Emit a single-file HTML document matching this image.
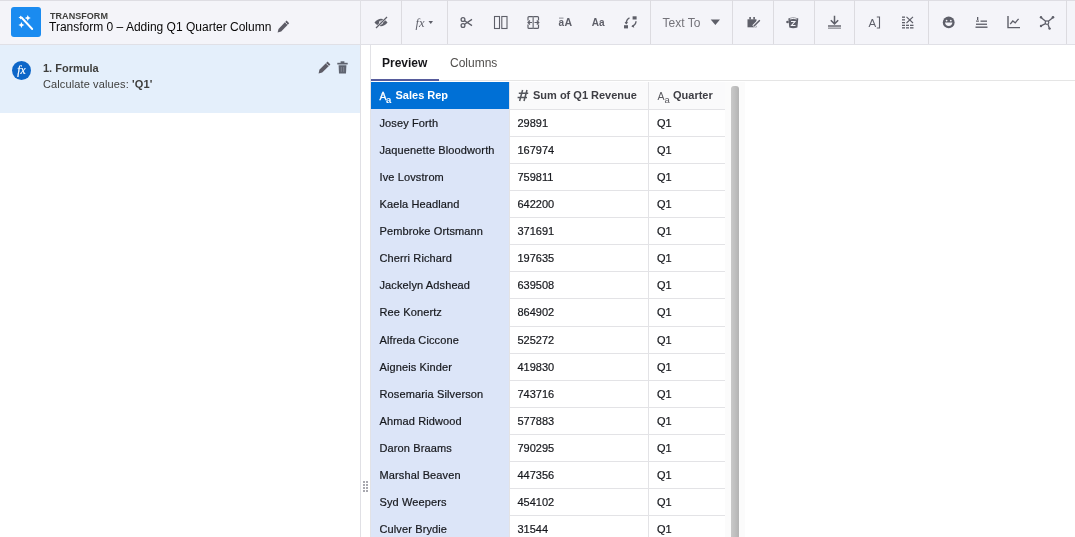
<!DOCTYPE html>
<html><head><meta charset="utf-8">
<style>
*{box-sizing:border-box;margin:0;padding:0}
html,body{width:1075px;height:537px;overflow:hidden;background:#fff;font-family:"Liberation Sans",sans-serif;color:#080707}
.abs{position:absolute}
#top{position:absolute;left:0;top:0;width:1075px;height:45px;background:#f4f4f9;border-bottom:1px solid #e0e0e6}
#topline{position:absolute;left:0;top:0;width:1075px;height:1px;background:#dedde3}
.sep{position:absolute;top:0;width:1px;height:44px;background:#dcdbe0}
.ico{position:absolute;overflow:visible}
#left{position:absolute;left:0;top:45px;width:360px;height:492px;background:#fff}
#vdiv{position:absolute;left:360px;top:0;width:1px;height:537px;background:#e0e0e5}
#sel{position:absolute;left:0;top:45px;width:360px;height:68px;background:#e4effb}
#tabs{position:absolute;left:370px;top:45px;width:705px;height:37px;background:#fff}
#tabline{position:absolute;left:370px;top:80px;width:705px;height:1px;background:#e5e5e5}
#tabul{position:absolute;left:371px;top:79px;width:68px;height:2px;background:#575c9c}
.cell{position:absolute;height:27px;font-size:11px;line-height:27px;white-space:nowrap;-webkit-text-stroke:0.2px currentColor}
</style></head><body><div id="wrap" style="position:absolute;left:0;top:0;width:1075px;height:537px;will-change:transform">
<div id="top"></div>
<div id="topline"></div>

<!-- toolbar -->
<svg class="ico" style="left:0;top:0" width="1075" height="45" viewBox="0 0 1075 45">
 <g fill="#dcdbe0">
  <rect x="401" y="0" width="1" height="44"/><rect x="447" y="0" width="1" height="44"/>
  <rect x="650" y="0" width="1" height="44"/><rect x="732" y="0" width="1" height="44"/>
  <rect x="773" y="0" width="1" height="44"/><rect x="814" y="0" width="1" height="44"/>
  <rect x="854" y="0" width="1" height="44"/><rect x="928" y="0" width="1" height="44"/>
  <rect x="1066" y="0" width="1" height="44"/>
 </g>
 <g fill="#5e5f69" stroke="none">
  <!-- eye slash -->
  <path d="M374.5 22.5 Q381 15 387.5 22.5 Q381 30 374.5 22.5Z"/>
  <circle cx="381" cy="22.5" r="2" fill="#f4f4f9"/>
  <circle cx="381" cy="22.5" r="1.1"/>
  <path d="M376 28 L387 17" stroke="#f4f4f9" stroke-width="2.4"/>
  <path d="M376 28 L387 17" stroke="#5e5f69" stroke-width="1.2"/>
  <!-- fx -->
  <text x="415.5" y="26.5" font-family="Liberation Serif" font-style="italic" font-size="12.5" fill="#5e5f69">fx</text>
  <path d="M428.5 21 H433 L430.75 24 Z"/>
  <!-- scissors -->
  <g fill="none" stroke="#5e5f69" stroke-width="1.3">
   <circle cx="463" cy="19.5" r="1.9"/><circle cx="463" cy="25.5" r="1.9"/>
   <path d="M464.6 20.8 L472 25.6 M464.6 24.2 L472 19.4"/>
  </g>
  <!-- split columns -->
  <g fill="none" stroke="#5e5f69" stroke-width="1.1">
   <rect x="494.5" y="16.5" width="5" height="12"/><rect x="501.8" y="16.5" width="5.2" height="12"/>
  </g>
  <!-- merge -->
  <g fill="none" stroke="#5e5f69" stroke-width="1.2">
   <path d="M528 20.5 V17.5 Q528 16.6 529 16.6 H537.5 Q538.5 16.6 538.5 17.5 V20.5"/>
   <path d="M528 24.5 V27.5 Q528 28.4 529 28.4 H537.5 Q538.5 28.4 538.5 27.5 V24.5"/>
   <path d="M533.2 16.6 V28.4" stroke="#8d8e96" stroke-width="1.6"/>
   <path d="M528 22.5 H532 M534.5 22.5 H538.8 M530 20.5 L528 22.5 L530 24.5 M536.8 20.5 L538.8 22.5 L536.8 24.5"/>
  </g>
  <!-- aA -->
  <text x="558.5" y="26.3" font-size="10" font-weight="bold" fill="#5e5f69">a</text>
  <text x="564.5" y="26.3" font-size="10.5" font-weight="bold" fill="#5e5f69">A</text>
  <rect x="559" y="17.6" width="4.5" height="1" fill="#8d8e96"/>
  <!-- Aa -->
  <text x="591.8" y="26.3" font-size="10" font-weight="bold" fill="#5e5f69">Aa</text>
  <!-- swap -->
  <rect x="632.6" y="16.3" width="4" height="3.2"/>
  <rect x="624" y="25.2" width="4" height="3.2"/>
  <path d="M629.5 17.8 Q626.5 19 626.2 23.5" fill="none" stroke="#5e5f69" stroke-width="1.4"/>
  <path d="M624.6 22 L626.2 24.4 L628.2 22.2Z"/>
  <path d="M636 21.2 Q635.8 25 632 26.4" fill="none" stroke="#5e5f69" stroke-width="1.4"/>
  <path d="M633.6 24.4 L631.4 26.6 L634.2 27.8Z"/>
  <!-- Text To -->
  <text x="662.5" y="26.8" font-size="12" fill="#74737a">Text To</text>
  <path d="M710.7 19.4 H720 L715.35 25 Z"/>
  <!-- calendar edit -->
  <rect x="747.5" y="19.3" width="9" height="8"/>
  <rect x="749.3" y="17" width="1.6" height="2.5"/><rect x="753.3" y="17" width="1.6" height="2.5"/>
  <path d="M753.5 26.5 L760 20" stroke="#f4f4f9" stroke-width="3.4"/>
  <path d="M753.8 26.2 L759.8 20.2" stroke="#5e5f69" stroke-width="1.5"/>
  <!-- bucket -->
  <path d="M788.3 18.6 Q793 16.2 798.3 18.6 L797.4 27.4 Q793 29 789.3 27.4 Z"/>
  <path d="M789.8 19 Q793 17.8 796.8 19" stroke="#f4f4f9" stroke-width="1" fill="none"/>
  <path d="M791 21.5 H795 L791.5 25.5 H795.5" stroke="#f4f4f9" stroke-width="1.1" fill="none"/>
  <circle cx="787.5" cy="22" r="1.3"/>
  <!-- download -->
  <path d="M834.5 15.8 V23.5 M830.8 20.2 L834.5 23.9 L838.2 20.2" fill="none" stroke="#5e5f69" stroke-width="1.5"/>
  <rect x="828" y="25.3" width="13" height="1.4"/><rect x="828" y="27.5" width="13" height="1.3" fill="#8d8e96"/>
  <!-- A] -->
  <text x="868.6" y="27.4" font-size="11.5" fill="#5e5f69">A</text>
  <path d="M876.8 17 H879.5 V28 H876.8" fill="none" stroke="#5e5f69" stroke-width="1.1"/>
  <!-- grid x -->
  <g fill="#5e5f69">
   <rect x="902" y="16.5" width="3" height="1.3"/><rect x="902" y="19.2" width="3" height="1.3"/>
   <rect x="902" y="22" width="3" height="1.3"/><rect x="902" y="24.7" width="3" height="1.3"/>
   <rect x="902" y="27.2" width="3" height="1.3"/>
   <rect x="906" y="24.7" width="3" height="1.3"/><rect x="910" y="24.7" width="3.5" height="1.3"/>
   <rect x="906" y="27.2" width="3" height="1.3"/><rect x="910" y="27.2" width="3.5" height="1.3"/>
  </g>
  <path d="M906.5 16.8 L913 23 M913 16.8 L906.5 23" stroke="#5e5f69" stroke-width="1.1"/>
  <!-- smiley -->
  <circle cx="948.7" cy="22.4" r="5.9"/>
  <circle cx="946.6" cy="20.6" r="0.9" fill="#f4f4f9"/><circle cx="950.8" cy="20.6" r="0.9" fill="#f4f4f9"/>
  <path d="M945 22.6 H952.4 Q952 26 948.7 26 Q945.4 26 945 22.6Z" fill="#f4f4f9"/>
  <!-- list -->
  <rect x="977" y="17" width="1.3" height="3"/>
  <rect x="976" y="20.5" width="3" height="1.2"/>
  <rect x="980.5" y="20.5" width="6.5" height="1.3"/>
  <rect x="976" y="23.6" width="11" height="1.3"/>
  <rect x="975.5" y="26.5" width="12" height="1.4"/>
  <!-- chart -->
  <path d="M1008 16 V27.6 H1020" fill="none" stroke="#5e5f69" stroke-width="1.4"/>
  <path d="M1010.2 24.2 L1012.8 21 L1015.2 22.8 L1018.6 18.8" fill="none" stroke="#5e5f69" stroke-width="1.3"/>
  <!-- network -->
  <circle cx="1047" cy="22.6" r="1.8" fill="none" stroke="#5e5f69" stroke-width="1.2"/>
  <path d="M1041 17.5 L1045.6 21.3 M1053 17.5 L1048.4 21.3 M1041 25.8 L1045.5 23.6 M1048 24.2 L1049.5 28.8" stroke="#5e5f69" stroke-width="1.3"/>
  <circle cx="1041" cy="17.3" r="1.2"/><circle cx="1053" cy="17.3" r="1.3"/><circle cx="1041" cy="26" r="1.2"/><circle cx="1049.6" cy="28.6" r="1.2"/>
 </g>
</svg>
<!-- left header -->
<div class="abs" style="left:11px;top:7px;width:30px;height:30px;background:#1a8bf0;border-radius:3px"></div>
<svg class="ico" style="left:11px;top:7px" width="30" height="30" viewBox="0 0 30 30">
  <path d="M10.5 10.5 L21.2 22" stroke="#fff" stroke-width="1.9" stroke-linecap="round"/>
  <path d="M16.8 8 l0.9 2.1 2.1 0.9 -2.1 0.9 -0.9 2.1 -0.9 -2.1 -2.1 -0.9 2.1 -0.9z" fill="#fff"/>
  <path d="M10.4 15 l0.9 2.1 2.1 0.9 -2.1 0.9 -0.9 2.1 -0.9 -2.1 -2.1 -0.9 2.1 -0.9z" fill="#fff"/>
  <path d="M9.6 8.4 l0.7 1.4 1.4 0.7 -1.4 0.7 -0.7 1.4 -0.7 -1.4 -1.4 -0.7 1.4 -0.7z" fill="#fff"/>
</svg>
<div class="abs" style="left:50px;top:12px;font-size:9px;font-weight:bold;color:#3e3e3c;line-height:9px;letter-spacing:0.05px">TRANSFORM</div>
<div class="abs" style="left:49px;top:20px;font-size:12px;line-height:14px;color:#080707;white-space:nowrap">Transform 0 &#8211; Adding Q1 Quarter Column</div>
<svg class="ico" style="left:277px;top:20px" width="13" height="13" viewBox="0 0 13 13">
  <path d="M9.6 0.6 L12.2 3.2 L4.2 11.4 L0.6 12.4 L1.5 8.9 Z" fill="#5d5c66"/>
  <path d="M8.2 2.3 L10.5 4.6" stroke="#f4f4f9" stroke-width="0.9"/>
</svg>

<div id="sel"></div>
<div class="abs" style="left:12px;top:61px;width:19px;height:19px;border-radius:50%;background:#0d66c8"></div>
<div class="abs" style="left:12px;top:61px;width:19px;height:19px;font-family:'Liberation Serif';font-style:italic;font-size:11.5px;line-height:19px;text-align:center;color:#fff;-webkit-text-stroke:0.2px #fff">fx</div>
<div class="abs" style="left:43px;top:62px;font-size:11px;font-weight:bold;line-height:13px;color:#3e3e3c">1. Formula</div>
<div class="abs" style="left:43px;top:78px;font-size:11px;line-height:13px;color:#3e3e3c;letter-spacing:0.12px">Calculate values: <b>'Q1'</b></div>
<svg class="ico" style="left:318px;top:61px" width="13" height="13" viewBox="0 0 13 13">
  <path d="M9.6 0.6 L12.4 3.4 L4.2 11.6 L0.6 12.4 L1.4 8.8 Z" fill="#5d5c66"/>
  <path d="M8.2 2.4 L10.6 4.8" stroke="#e4effb" stroke-width="0.9"/>
</svg>
<svg class="ico" style="left:337px;top:61px" width="11" height="13" viewBox="0 0 11 13">
  <rect x="0.3" y="1.8" width="10.4" height="1.7" fill="#5f6470"/>
  <rect x="3.6" y="0.3" width="3.8" height="1.8" fill="#5f6470"/>
  <path d="M1.6 4.3 H9.4 L9 12.4 H2 Z" fill="#5f6470"/>
  <path d="M4.3 6 V10.8 M6.7 6 V10.8" stroke="#8a8f9a" stroke-width="0.8"/>
</svg>

<div id="vdiv"></div>

<!-- tabs -->
<div class="abs" style="left:370px;top:45px;width:1px;height:492px;background:#e2e2e6"></div>
<div id="tabline"></div>
<div id="tabul"></div>
<div class="abs" style="left:382px;top:56px;font-size:12px;font-weight:bold;line-height:14px;color:#16161a">Preview</div>
<div class="abs" style="left:450px;top:56px;font-size:12px;line-height:14px;color:#514f4d">Columns</div>

<div id="grid">
<div class="abs" style="left:371px;top:82px;width:138px;height:455px;background:#dce5f8"></div>
<div class="abs" style="left:509px;top:82px;width:216px;height:27px;background:#fafafb"></div>
<div class="abs" style="left:371px;top:82px;width:138px;height:27px;background:#0070d6"></div>
<div class="abs" style="left:509px;top:82px;width:1px;height:455px;background:#e3e3e6"></div>
<div class="abs" style="left:648px;top:82px;width:1px;height:455px;background:#e3e3e6"></div>
<div class="abs" style="left:510px;top:109px;width:215px;height:1px;background:#e3e3e6"></div>
<div class="cell" style="left:379.5px;top:109.90px;color:#16181d;letter-spacing:0.12px">Josey Forth</div>
<div class="cell" style="left:517.5px;top:109.90px;color:#16181d">29891</div>
<div class="cell" style="left:657px;top:109.90px;color:#16181d">Q1</div>
<div class="abs" style="left:510px;top:136px;width:215px;height:1px;background:#e3e3e6"></div>
<div class="cell" style="left:379.5px;top:136.98px;color:#16181d;letter-spacing:0.12px">Jaquenette Bloodworth</div>
<div class="cell" style="left:517.5px;top:136.98px;color:#16181d">167974</div>
<div class="cell" style="left:657px;top:136.98px;color:#16181d">Q1</div>
<div class="abs" style="left:510px;top:163px;width:215px;height:1px;background:#e3e3e6"></div>
<div class="cell" style="left:379.5px;top:164.05px;color:#16181d;letter-spacing:0.12px">Ive Lovstrom</div>
<div class="cell" style="left:517.5px;top:164.05px;color:#16181d">759811</div>
<div class="cell" style="left:657px;top:164.05px;color:#16181d">Q1</div>
<div class="abs" style="left:510px;top:190px;width:215px;height:1px;background:#e3e3e6"></div>
<div class="cell" style="left:379.5px;top:191.13px;color:#16181d;letter-spacing:0.12px">Kaela Headland</div>
<div class="cell" style="left:517.5px;top:191.13px;color:#16181d">642200</div>
<div class="cell" style="left:657px;top:191.13px;color:#16181d">Q1</div>
<div class="abs" style="left:510px;top:217px;width:215px;height:1px;background:#e3e3e6"></div>
<div class="cell" style="left:379.5px;top:218.21px;color:#16181d;letter-spacing:0.12px">Pembroke Ortsmann</div>
<div class="cell" style="left:517.5px;top:218.21px;color:#16181d">371691</div>
<div class="cell" style="left:657px;top:218.21px;color:#16181d">Q1</div>
<div class="abs" style="left:510px;top:244px;width:215px;height:1px;background:#e3e3e6"></div>
<div class="cell" style="left:379.5px;top:245.29px;color:#16181d;letter-spacing:0.12px">Cherri Richard</div>
<div class="cell" style="left:517.5px;top:245.29px;color:#16181d">197635</div>
<div class="cell" style="left:657px;top:245.29px;color:#16181d">Q1</div>
<div class="abs" style="left:510px;top:271px;width:215px;height:1px;background:#e3e3e6"></div>
<div class="cell" style="left:379.5px;top:272.36px;color:#16181d;letter-spacing:0.12px">Jackelyn Adshead</div>
<div class="cell" style="left:517.5px;top:272.36px;color:#16181d">639508</div>
<div class="cell" style="left:657px;top:272.36px;color:#16181d">Q1</div>
<div class="abs" style="left:510px;top:298px;width:215px;height:1px;background:#e3e3e6"></div>
<div class="cell" style="left:379.5px;top:299.44px;color:#16181d;letter-spacing:0.12px">Ree Konertz</div>
<div class="cell" style="left:517.5px;top:299.44px;color:#16181d">864902</div>
<div class="cell" style="left:657px;top:299.44px;color:#16181d">Q1</div>
<div class="abs" style="left:510px;top:326px;width:215px;height:1px;background:#e3e3e6"></div>
<div class="cell" style="left:379.5px;top:326.52px;color:#16181d;letter-spacing:0.12px">Alfreda Ciccone</div>
<div class="cell" style="left:517.5px;top:326.52px;color:#16181d">525272</div>
<div class="cell" style="left:657px;top:326.52px;color:#16181d">Q1</div>
<div class="abs" style="left:510px;top:353px;width:215px;height:1px;background:#e3e3e6"></div>
<div class="cell" style="left:379.5px;top:353.59px;color:#16181d;letter-spacing:0.12px">Aigneis Kinder</div>
<div class="cell" style="left:517.5px;top:353.59px;color:#16181d">419830</div>
<div class="cell" style="left:657px;top:353.59px;color:#16181d">Q1</div>
<div class="abs" style="left:510px;top:380px;width:215px;height:1px;background:#e3e3e6"></div>
<div class="cell" style="left:379.5px;top:380.67px;color:#16181d;letter-spacing:0.12px">Rosemaria Silverson</div>
<div class="cell" style="left:517.5px;top:380.67px;color:#16181d">743716</div>
<div class="cell" style="left:657px;top:380.67px;color:#16181d">Q1</div>
<div class="abs" style="left:510px;top:407px;width:215px;height:1px;background:#e3e3e6"></div>
<div class="cell" style="left:379.5px;top:407.75px;color:#16181d;letter-spacing:0.12px">Ahmad Ridwood</div>
<div class="cell" style="left:517.5px;top:407.75px;color:#16181d">577883</div>
<div class="cell" style="left:657px;top:407.75px;color:#16181d">Q1</div>
<div class="abs" style="left:510px;top:434px;width:215px;height:1px;background:#e3e3e6"></div>
<div class="cell" style="left:379.5px;top:434.82px;color:#16181d;letter-spacing:0.12px">Daron Braams</div>
<div class="cell" style="left:517.5px;top:434.82px;color:#16181d">790295</div>
<div class="cell" style="left:657px;top:434.82px;color:#16181d">Q1</div>
<div class="abs" style="left:510px;top:461px;width:215px;height:1px;background:#e3e3e6"></div>
<div class="cell" style="left:379.5px;top:461.90px;color:#16181d;letter-spacing:0.12px">Marshal Beaven</div>
<div class="cell" style="left:517.5px;top:461.90px;color:#16181d">447356</div>
<div class="cell" style="left:657px;top:461.90px;color:#16181d">Q1</div>
<div class="abs" style="left:510px;top:488px;width:215px;height:1px;background:#e3e3e6"></div>
<div class="cell" style="left:379.5px;top:488.98px;color:#16181d;letter-spacing:0.12px">Syd Weepers</div>
<div class="cell" style="left:517.5px;top:488.98px;color:#16181d">454102</div>
<div class="cell" style="left:657px;top:488.98px;color:#16181d">Q1</div>
<div class="abs" style="left:510px;top:515px;width:215px;height:1px;background:#e3e3e6"></div>
<div class="cell" style="left:379.5px;top:516.06px;color:#16181d;letter-spacing:0.12px">Culver Brydie</div>
<div class="cell" style="left:517.5px;top:516.06px;color:#16181d">31544</div>
<div class="cell" style="left:657px;top:516.06px;color:#16181d">Q1</div>
<div class="abs" style="left:510px;top:542px;width:215px;height:1px;background:#e3e3e6"></div>
<div class="cell" style="left:379.5px;top:543.13px;color:#16181d;letter-spacing:0.12px">Lorem</div>
<div class="cell" style="left:517.5px;top:543.13px;color:#16181d">100000</div>
<div class="cell" style="left:657px;top:543.13px;color:#16181d">Q1</div>
</div><!--/grid-->

<!-- table header -->
<div class="abs" style="left:379.5px;top:90.5px;font-size:10.5px;line-height:10px;color:#fff;white-space:nowrap;-webkit-text-stroke:0.3px #fff">A</div>
<div class="abs" style="left:386px;top:95px;font-size:9.5px;font-weight:bold;line-height:9px;color:#fff">a</div>
<div class="abs" style="left:395.5px;top:88px;font-size:11px;font-weight:bold;line-height:14px;color:#fff;white-space:nowrap">Sales Rep</div>
<svg class="ico" style="left:517px;top:89px" width="12" height="13" viewBox="0 0 12 13">
  <path d="M5.6 1 L2.6 12 M10 1 L7 12 M1.8 4.3 H11.2 M0.6 8.6 H10" stroke="#54565c" stroke-width="1.5" fill="none"/>
</svg>
<div class="abs" style="left:533px;top:88px;font-size:11px;font-weight:bold;line-height:14px;color:#3e3e44;white-space:nowrap">Sum of Q1 Revenue</div>
<div class="abs" style="left:657.5px;top:90.5px;font-size:10.5px;line-height:10px;color:#5a5a60;white-space:nowrap">A</div>
<div class="abs" style="left:664.5px;top:95px;font-size:9.5px;line-height:9px;color:#5a5a60">a</div>
<div class="abs" style="left:673px;top:88px;font-size:11px;font-weight:bold;line-height:14px;color:#3e3e44;white-space:nowrap">Quarter</div>
<!-- grip -->
<svg class="ico" style="left:363px;top:481px" width="6" height="12" viewBox="0 0 6 12">
  <g fill="#a9a9b0"><rect x="0" y="0" width="2" height="2"/><rect x="3" y="0" width="2" height="2"/><rect x="0" y="3" width="2" height="2"/><rect x="3" y="3" width="2" height="2"/><rect x="0" y="6" width="2" height="2"/><rect x="3" y="6" width="2" height="2"/><rect x="0" y="9" width="2" height="2"/><rect x="3" y="9" width="2" height="2"/></g>
</svg>
<!-- scrollbar -->
<div class="abs" style="left:725px;top:82px;width:20px;height:455px;background:#fbfbfb"></div>
<div class="abs" style="left:731px;top:86px;width:8px;height:460px;background:linear-gradient(to right,#c9c9c9,#bfbfbf 50%,#b3b3b3);border-radius:3px 3px 0 0"></div>
</div></body></html>
